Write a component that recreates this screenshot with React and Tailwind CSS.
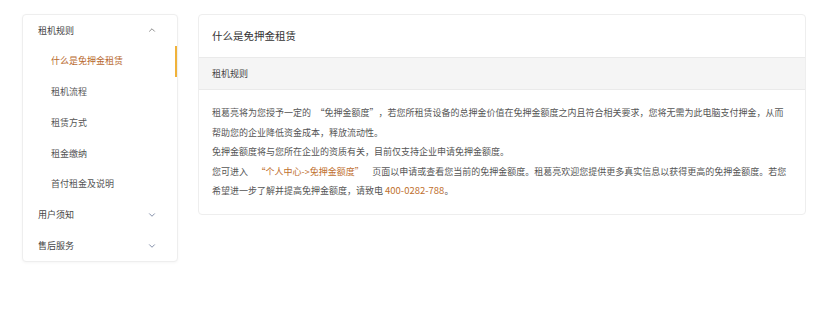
import { ChevronDown, ChevronUp } from "lucide-react"

const subItems = ["什么是免押金租赁", "租机流程", "租赁方式", "租金缴纳", "首付租金及说明"]

// curly quotes take a full CJK cell in the reference font
function Open() {
  return <span className="pl-[4.5px]">“</span>
}
function Close() {
  return <span className="pr-[4.5px]">”</span>
}

function GroupRow({ label, open }) {
  return (
    <div className="h-[30.75px] flex items-center justify-between pl-[15px] pr-[20px] text-[#444]">
      <span>{label}</span>
      {open ? (
        <ChevronUp size={10} strokeWidth={2} className="text-[#777]" />
      ) : (
        <ChevronDown size={10} strokeWidth={2} className="text-[#6b7a99]" />
      )}
    </div>
  )
}

export default function App() {
  const active = 0

  return (
    <div
      className="w-[828px] h-[310px] bg-white flex items-start gap-[20px] pl-[22px] pt-[14px] text-[9px]"
      style={{ fontFamily: '"Noto Sans CJK SC", "Noto Sans", sans-serif' }}
    >
      <div className="w-[156px] border border-[#eee] rounded-[4px] shadow-[0_1px_3px_rgba(0,0,0,0.04)] bg-white">
        <GroupRow label="租机规则" open />
        {subItems.map((item, i) => (
          <div
            key={item}
            className={
              i === active
                ? "h-[30.75px] flex items-center pl-[28px] text-[#b8692e] border-r-2 border-[#f0b23a]"
                : "h-[30.75px] flex items-center pl-[28px] text-[#555]"
            }
          >
            {item}
          </div>
        ))}
        <GroupRow label="用户须知" />
        <GroupRow label="售后服务" />
      </div>

      <div className="w-[608px] border border-[#eee] rounded-[4px] bg-white">
        <div className="h-[42px] flex items-center px-[13px] text-[10.5px] text-[#333]">什么是免押金租赁</div>
        <div className="h-[33px] flex items-center px-[13px] bg-[#f5f5f5] border-y border-[#eaeaea] text-[#444]">
          租机规则
        </div>
        <div className="px-[13px] py-[13px] leading-[19.5px] text-[#555]">
          <p>
            租葛亮将为您授予一定的<Open />免押金额度<Close />，若您所租赁设备的总押金价值在免押金额度之内且符合相关要求，您将无需为此电脑支付押金，从而帮助您的企业降低资金成本，释放流动性。
          </p>
          <p>免押金额度将与您所在企业的资质有关，目前仅支持企业申请免押金额度。</p>
          <p>
            您可进入{" "}
            <span className="mx-[2px] text-[#c0702f]">
              <Open />个人中心-&gt;免押金额度<Close />
            </span>{" "}
            页面以申请或查看您当前的免押金额度。租葛亮欢迎您提供更多真实信息以获得更高的免押金额度。若您希望进一步了解并提高免押金额度，请致电{" "}
            <span className="text-[9.5px] text-[#c0702f]">400-0282-788</span>。
          </p>
        </div>
      </div>
    </div>
  )
}
